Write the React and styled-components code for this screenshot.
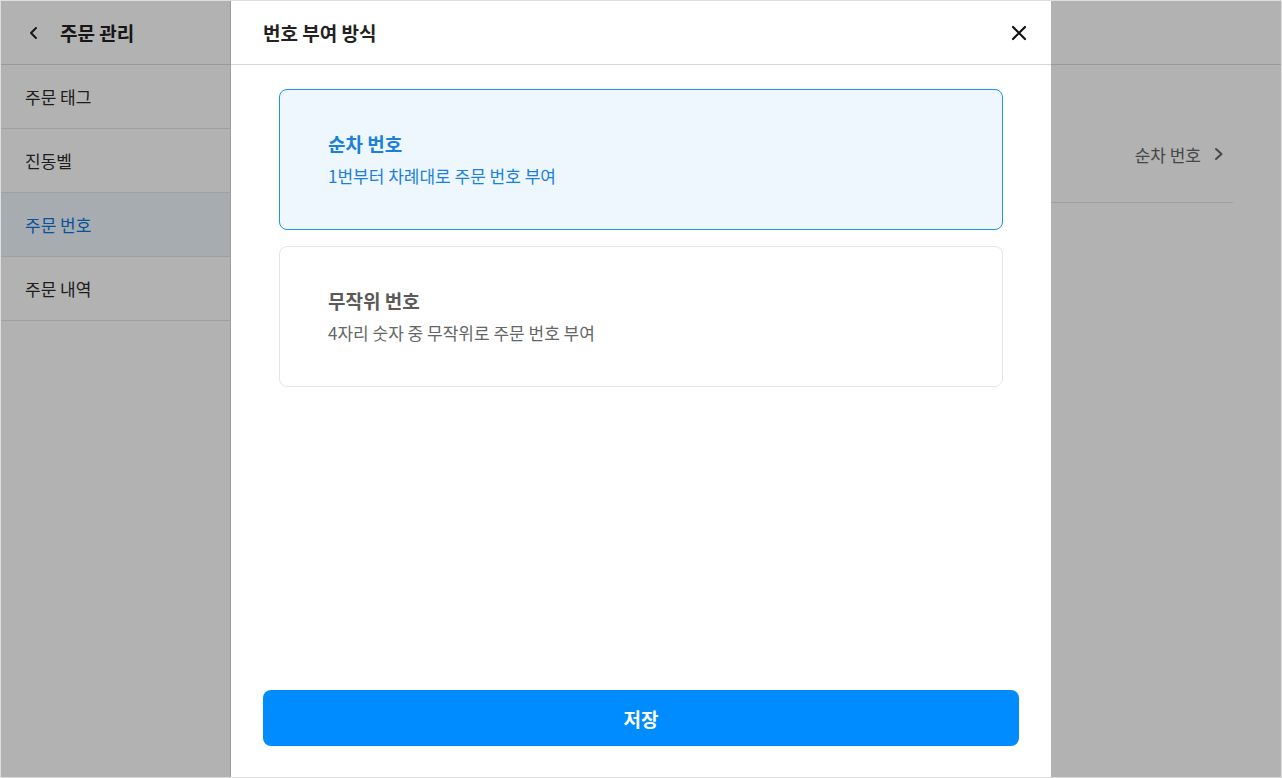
import React, { useState } from 'react';
import styled, { createGlobalStyle } from 'styled-components';

const GlobalStyle = createGlobalStyle`
  html, body {
    margin: 0;
    padding: 0;
    height: 100%;
  }
  body {
    font-family: "Noto Sans CJK KR", "Noto Sans", sans-serif;
    color: #222;
    background: #fff;
  }
  * {
    box-sizing: border-box;
  }
`;

const Frame = styled.div`
  position: relative;
  height: 100vh;
  border: 1px solid #dedede;
  overflow: hidden;
  display: flex;
  background: #fff;
`;

const Sidebar = styled.aside`
  width: 230px;
  flex-shrink: 0;
  border-right: 1px solid #e3e3e3;
  display: flex;
  flex-direction: column;
`;

const Header = styled.div`
  height: 64px;
  flex-shrink: 0;
  display: flex;
  align-items: center;
  gap: 17px;
  padding: 0 24px;
  border-bottom: 1px solid #dcdcdc;
  font-size: 19px;
  font-weight: 700;
  color: #222;
`;

const NavItem = styled.div`
  height: 64px;
  display: flex;
  align-items: center;
  padding: 0 24px;
  border-bottom: 1px solid #e6e6e6;
  font-size: 17px;
  color: ${(p) => (p.$active ? '#0b78e0' : '#2b2b2b')};
  background: ${(p) => (p.$active ? '#f0f6fd' : 'transparent')};
`;

const Content = styled.main`
  flex: 1;
  display: flex;
  flex-direction: column;
`;

const ContentBody = styled.div`
  padding: 41px 48px 0 32px;
`;

const SettingRow = styled.div`
  height: 97px;
  display: flex;
  align-items: center;
  justify-content: flex-end;
  border-bottom: 1px solid #e6e6e6;
  font-size: 17px;
`;

const RowValue = styled.span`
  display: flex;
  align-items: center;
  gap: 10px;
  margin-right: 6px;
  color: #666;
`;

const Overlay = styled.div`
  position: absolute;
  inset: 0;
  background: rgba(0, 0, 0, 0.3);
  display: flex;
  justify-content: center;
`;

const Modal = styled.div`
  width: 820px;
  height: 100%;
  background: #fff;
  display: flex;
  flex-direction: column;
`;

const ModalHeader = styled.div`
  height: 64px;
  flex-shrink: 0;
  display: flex;
  align-items: center;
  justify-content: space-between;
  padding: 0 20px 0 32px;
  border-bottom: 1px solid #d6d6d6;
`;

const ModalTitle = styled.h2`
  margin: 0;
  font-size: 19px;
  font-weight: 700;
  color: #222;
`;

const CloseButton = styled.button`
  border: none;
  background: none;
  padding: 0;
  width: 24px;
  height: 24px;
  display: flex;
  align-items: center;
  justify-content: center;
  cursor: pointer;
  color: #111;
`;

const ModalBody = styled.div`
  flex: 1;
  display: flex;
  flex-direction: column;
  gap: 16px;
  padding: 24px 48px 0;
`;

const OptionCard = styled.div`
  height: 141px;
  display: flex;
  flex-direction: column;
  justify-content: center;
  gap: 7px;
  padding: 0 48px;
  border-radius: 8px;
  border: 1px solid ${(p) => (p.$selected ? '#2292e6' : '#e6e6e6')};
  background: ${(p) => (p.$selected ? '#eef7fe' : '#fff')};
  cursor: pointer;
`;

const OptionTitle = styled.div`
  font-size: 19px;
  line-height: 26px;
  font-weight: 700;
  color: ${(p) => (p.$selected ? '#1b80dc' : '#5a5a5a')};
`;

const OptionDesc = styled.div`
  font-size: 17px;
  line-height: 24px;
  color: ${(p) => (p.$selected ? '#1b80dc' : '#666')};
`;

const ModalFooter = styled.div`
  padding: 0 32px 31px;
`;

const SaveButton = styled.button`
  width: 100%;
  height: 56px;
  border: none;
  border-radius: 8px;
  background: #008cff;
  color: #fff;
  font-family: inherit;
  font-size: 19px;
  font-weight: 700;
  cursor: pointer;
`;

const ChevronLeft = () => (
  <svg width="18" height="18" viewBox="0 0 18 18" fill="none">
    <path d="M11 4L6 9l5 5" stroke="#222" strokeWidth="2" strokeLinecap="round" strokeLinejoin="round" />
  </svg>
);

const ChevronRight = () => (
  <svg width="16" height="16" viewBox="0 0 16 16" fill="none">
    <path d="M5 3l5.5 5L5 13" stroke="#666" strokeWidth="2" strokeLinecap="round" strokeLinejoin="round" />
  </svg>
);

const CloseIcon = () => (
  <svg width="16" height="16" viewBox="0 0 16 16" fill="none">
    <path d="M2 2l12 12M14 2L2 14" stroke="#111" strokeWidth="2.2" strokeLinecap="round" />
  </svg>
);

const options = [
  { id: 'seq', title: '순차 번호', desc: '1번부터 차례대로 주문 번호 부여' },
  { id: 'rand', title: '무작위 번호', desc: '4자리 숫자 중 무작위로 주문 번호 부여' },
];

const menu = ['주문 태그', '진동벨', '주문 번호', '주문 내역'];

export default function App() {
  const [selected, setSelected] = useState('seq');

  return (
    <Frame>
      <GlobalStyle />
      <Sidebar>
        <Header>
          <ChevronLeft />
          주문 관리
        </Header>
        {menu.map((m) => (
          <NavItem key={m} $active={m === '주문 번호'}>
            {m}
          </NavItem>
        ))}
      </Sidebar>
      <Content>
        <Header />
        <ContentBody>
          <SettingRow>
            <RowValue>
              순차 번호
              <ChevronRight />
            </RowValue>
          </SettingRow>
        </ContentBody>
      </Content>

      <Overlay>
        <Modal>
          <ModalHeader>
            <ModalTitle>번호 부여 방식</ModalTitle>
            <CloseButton aria-label="닫기">
              <CloseIcon />
            </CloseButton>
          </ModalHeader>
          <ModalBody>
            {options.map((o) => (
              <OptionCard key={o.id} $selected={selected === o.id} onClick={() => setSelected(o.id)}>
                <OptionTitle $selected={selected === o.id}>{o.title}</OptionTitle>
                <OptionDesc $selected={selected === o.id}>{o.desc}</OptionDesc>
              </OptionCard>
            ))}
          </ModalBody>
          <ModalFooter>
            <SaveButton>저장</SaveButton>
          </ModalFooter>
        </Modal>
      </Overlay>
    </Frame>
  );
}
